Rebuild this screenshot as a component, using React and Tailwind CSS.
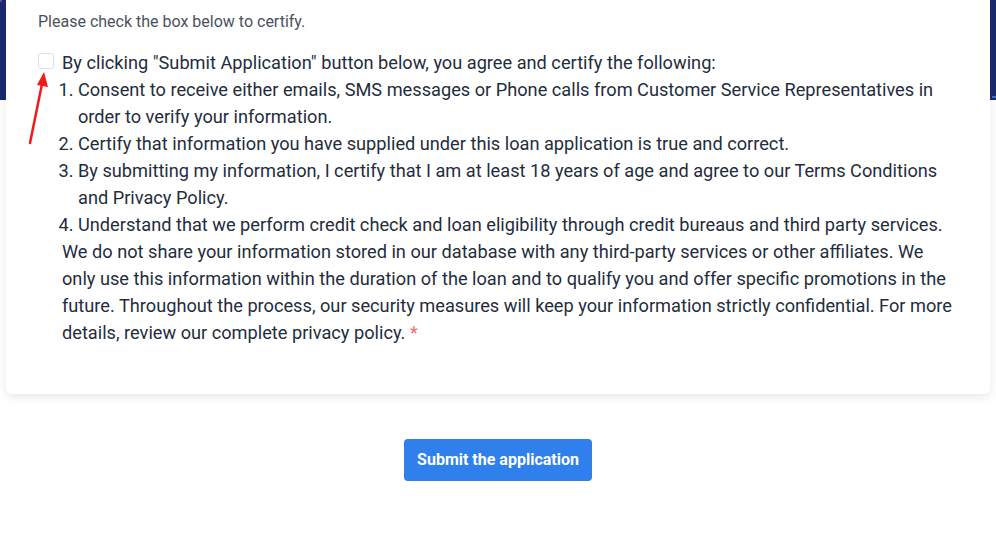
import { useState } from "react";

const dots = Array.from({ length: 140 }, (_, i) => {
  const x = (i * 37.3) % 996;
  const y = (i * 53.7) % 100;
  const purple = i % 3 === 0;
  return { x, y, purple, w: 2 + (i % 3), h: 2 + ((i * 7) % 4) };
});

export default function App() {
  const [agree, setAgree] = useState(false);

  return (
    <div className="min-h-screen bg-white font-['Roboto','Liberation_Sans',sans-serif]">
      {/* Header band behind the card */}
      <div className="relative h-[100px] bg-[#1b2a6b] overflow-hidden">
        <svg className="absolute inset-0 w-full h-full" viewBox="0 0 996 100" preserveAspectRatio="none">
          {dots.map((d, i) => (
            <rect key={i} x={d.x} y={d.y} width={d.w} height={d.h} fill={d.purple ? "#8b3fa3" : "#4a7fd6"} opacity="0.85" />
          ))}
        </svg>
      </div>

      <div className="px-[6px]">
        {/* Card */}
        <div className="relative -mt-[100px] bg-white rounded-b-md shadow-[0_3px_10px_rgba(30,30,60,0.10)] pl-[32px] pr-[30px] pt-[10px] pb-[48px]">
          <p className="text-[16px] leading-6 text-[#4a5260]">Please check the box below to certify.</p>

          {/* Red arrow pointing at the checkbox */}
          <svg className="absolute left-[18px] top-[70px]" width="28" height="76" viewBox="0 0 28 76">
            <line x1="6" y1="73" x2="18" y2="14" stroke="#f01a1a" strokeWidth="2.5" strokeLinecap="round" />
            <polygon points="20,2 24,17 13,15" fill="#f01a1a" />
          </svg>

          <div className="mt-[15px] flex items-start gap-[8px] text-[18.2px] leading-[27px] text-[#1f2d3d]">
            <button
              onClick={() => setAgree(!agree)}
              className={`mt-[4px] w-4 h-4 shrink-0 rounded-[3px] border ${agree ? "bg-[#2f80ed] border-[#2f80ed]" : "bg-white border-[#dcdfe6]"}`}
            />
            <div>
              <p>By clicking "Submit Application" button below, you agree and certify the following:</p>
              <ol className="list-decimal pl-[16px]">
                <li>Consent to receive either emails, SMS messages or Phone calls from Customer Service Representatives in order to verify your information.</li>
                <li>Certify that information you have supplied under this loan application is true and correct.</li>
                <li>By submitting my information, I certify that I am at least 18 years of age and agree to our Terms Conditions and Privacy Policy.</li>
                <li>Understand that we perform credit check and loan eligibility through credit bureaus and third party services.</li>
              </ol>
              <p>
                We do not share your information stored in our database with any third-party services or other affiliates. We only use this information within the duration of the loan and to qualify you and offer specific promotions in the future. Throughout the process, our security measures will keep your information strictly confidential. For more details, review our complete privacy policy. <span className="text-[#f56c6c]">*</span>
              </p>
            </div>
          </div>
        </div>
      </div>

      <div className="flex justify-center mt-[45px]">
        <button className="h-[42px] px-[13px] rounded-[4px] bg-[#2f80ed] text-white text-[16px] font-bold">
          Submit the application
        </button>
      </div>
    </div>
  );
}
